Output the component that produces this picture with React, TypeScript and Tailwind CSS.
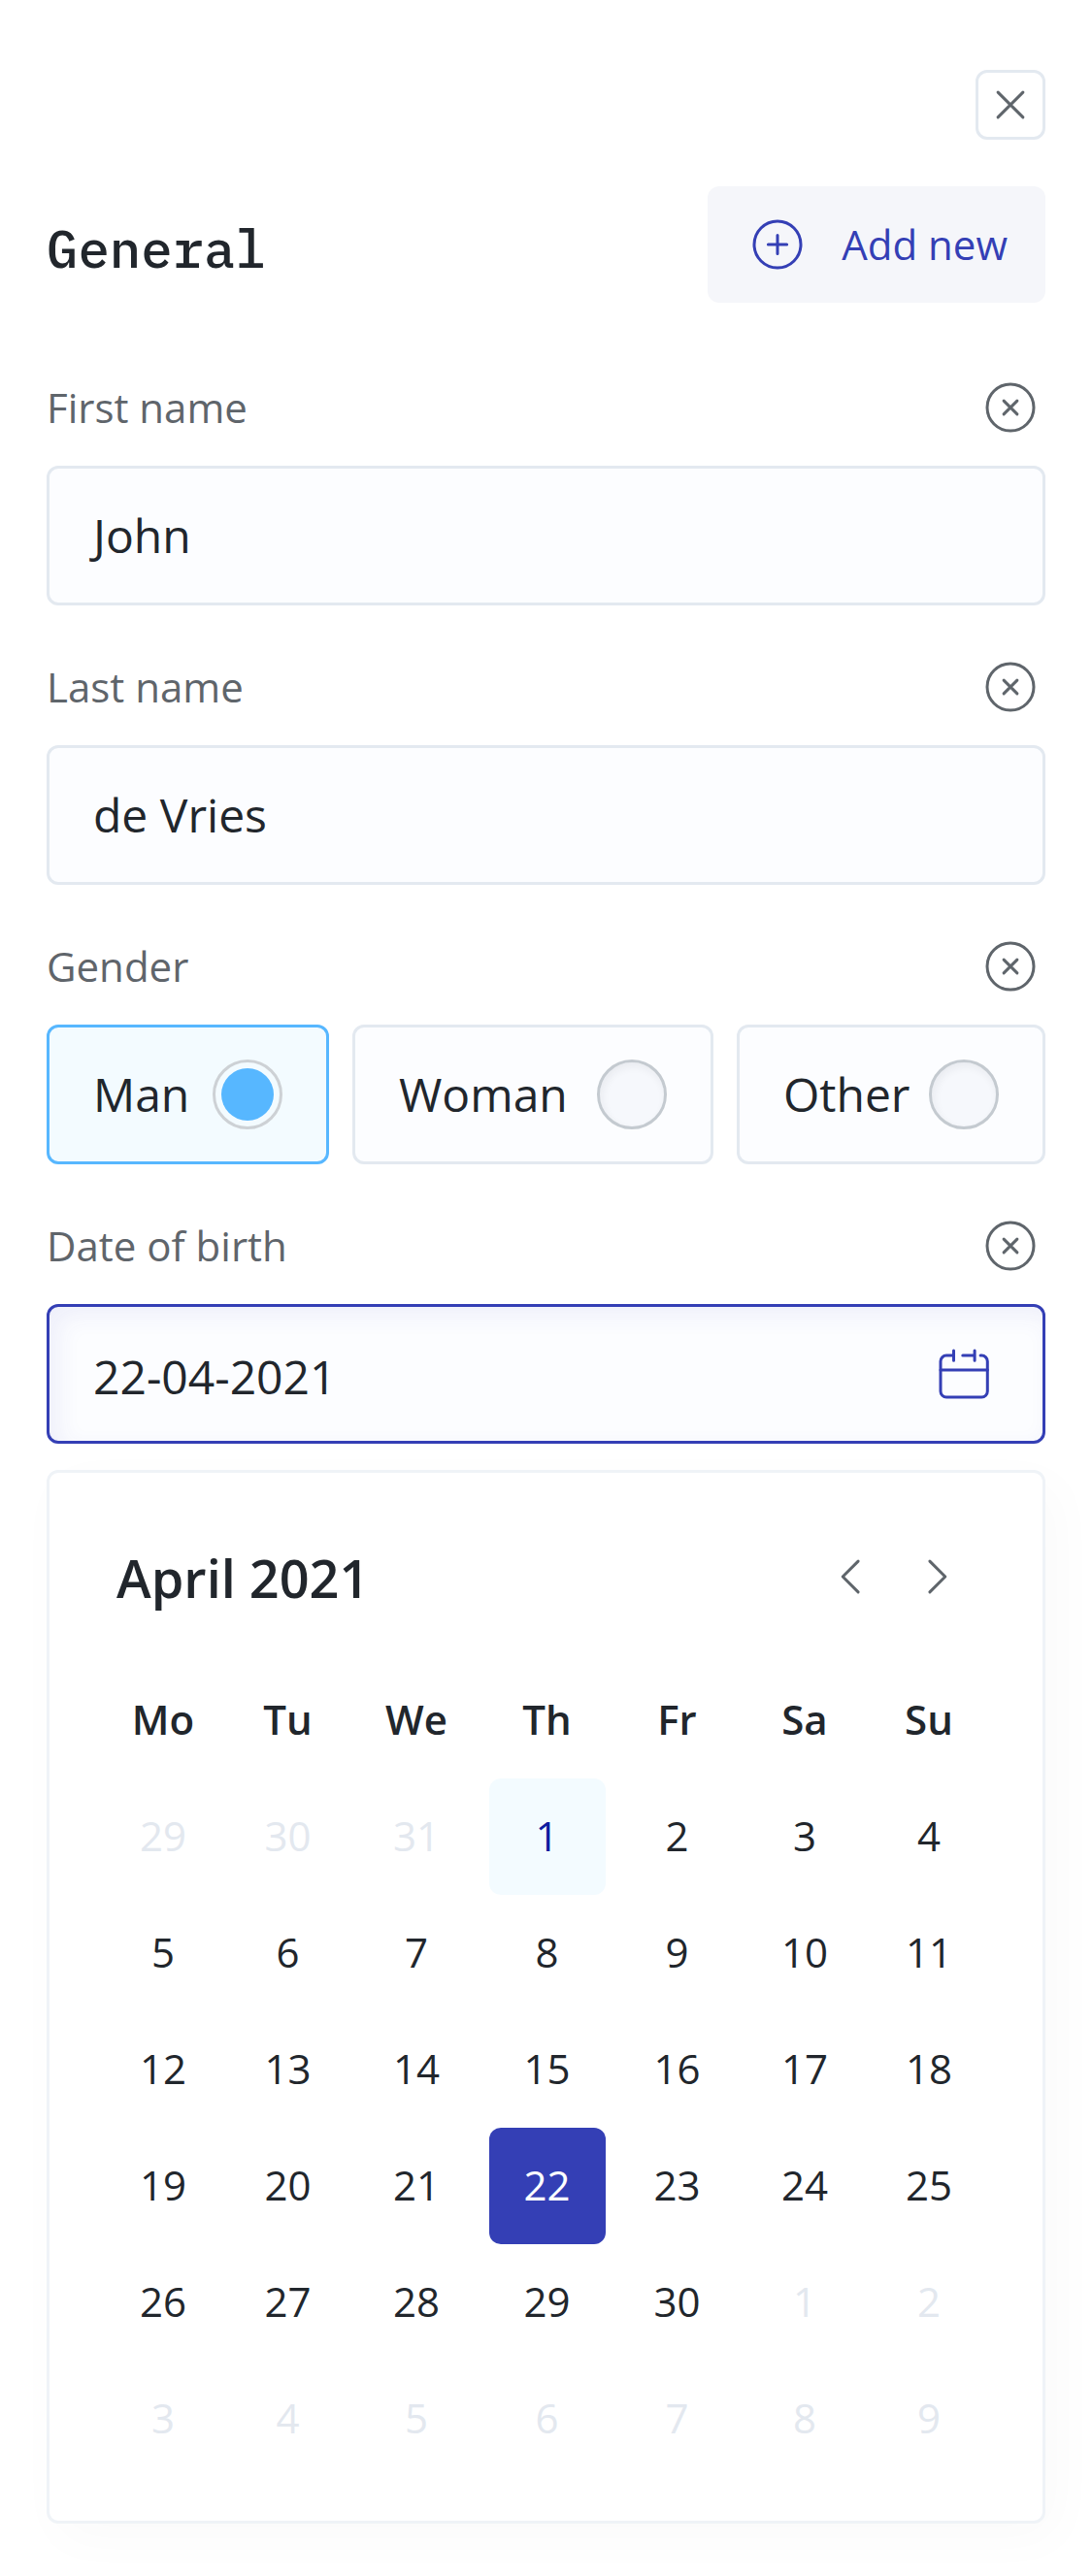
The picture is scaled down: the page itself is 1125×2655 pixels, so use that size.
import { useState } from "react";
import type { ReactNode } from "react";

const WEEKDAYS = ["Mo", "Tu", "We", "Th", "Fr", "Sa", "Su"];
const FULL_WEEKDAYS = ["Monday", "Tuesday", "Wednesday", "Thursday", "Friday", "Saturday", "Sunday"];
const COLUMN_WIDTHS = ["w-[126px]", "w-[131px]", "w-[134px]", "w-[135px]", "w-[133px]", "w-[130px]", "w-[126px]"];

type Day = { date: number; month: number };

// Six weeks starting on Monday 29 March 2021.
const WEEKS: Day[][] = Array.from({ length: 6 }, (_, week) =>
  Array.from({ length: 7 }, (_, weekday) => {
    const d = new Date(2021, 2, 29 + week * 7 + weekday);
    return { date: d.getDate(), month: d.getMonth() };
  }),
);

function Icon({ children }: { children: ReactNode }) {
  return (
    <svg
      viewBox="0 0 24 24"
      className="size-[72px] shrink-0"
      fill="none"
      stroke="currentColor"
      strokeWidth="1"
      strokeLinecap="round"
      strokeLinejoin="round"
      aria-hidden="true"
    >
      {children}
    </svg>
  );
}

function ClearButton({ name, onClick }: { name: string; onClick: () => void }) {
  return (
    <button type="button" aria-label={`Clear ${name}`} onClick={onClick}>
      <Icon>
        <circle cx="12" cy="12" r="8" />
        <path d="M9.7 9.7l4.6 4.6M14.3 9.7l-4.6 4.6" />
      </Icon>
    </button>
  );
}

function TextField({ id, label, initial }: { id: string; label: string; initial: string }) {
  const [value, setValue] = useState(initial);
  return (
    <div className="flex flex-col gap-6">
      <div className="flex items-center justify-between text-[#5f656b]">
        <label htmlFor={id} className="text-[42px] leading-[70px]">
          {label}
        </label>
        <ClearButton name={label} onClick={() => setValue("")} />
      </div>
      <input
        id={id}
        type="text"
        value={value}
        onChange={(e) => setValue(e.target.value)}
        className="h-36 w-full rounded-xl border-3 border-[#e3e9f0] bg-[#fcfdff] px-[37px] pb-0.5 indent-2 text-5xl outline-none"
      />
    </div>
  );
}

function GenderField() {
  const [gender, setGender] = useState("Man");
  return (
    <div role="radiogroup" aria-labelledby="gender-label" className="flex flex-col gap-6">
      <div className="flex items-center justify-between text-[#5f656b]">
        <span id="gender-label" className="text-[42px] leading-[70px]">
          Gender
        </span>
        <ClearButton name="Gender" onClick={() => setGender("")} />
      </div>
      <div className="grid grid-cols-[291fr_372fr_318fr] gap-6">
        {["Man", "Woman", "Other"].map((option) => (
          <label
            key={option}
            className="flex h-36 items-center justify-between rounded-xl border-3 border-[#e3e9f0] bg-[#fcfdff] px-[45px] text-5xl has-checked:border-[#57b7ff] has-checked:bg-[#f3fbff]"
          >
            {option}
            <input
              type="radio"
              name="gender"
              value={option}
              checked={gender === option}
              onChange={() => setGender(option)}
              className="size-[72px] shrink-0 appearance-none rounded-full border-3 border-[#c4cad0] bg-[#f6f8fc] p-1.5 shadow-[inset_2px_4px_9px_rgba(33,38,44,0.06)] checked:border-[#cdd1d5] checked:bg-[#57b7ff] checked:bg-clip-content checked:shadow-none"
            />
          </label>
        ))}
      </div>
    </div>
  );
}

function DayButton({ day, selected, onSelect }: { day: Day; selected: boolean; onSelect: () => void }) {
  let tone = "text-[#21262c]";
  if (selected) tone = "bg-[#343fb5] text-white";
  else if (day.month !== 3) tone = "text-[#e3e8ef]";
  else if (day.date === 1) tone = "bg-[#f3fbff] text-[#0e1ca0]";
  return (
    <button
      type="button"
      onClick={onSelect}
      aria-pressed={selected}
      className={`mx-auto flex size-[120px] items-center justify-center rounded-xl pb-0.5 ${tone}`}
    >
      {day.date}
    </button>
  );
}

function DateField() {
  const [value, setValue] = useState("22-04-2021");
  return (
    <div className="flex flex-col gap-6">
      <div className="flex items-center justify-between text-[#5f656b]">
        <label htmlFor="birth" className="text-[42px] leading-[70px]">
          Date of birth
        </label>
        <ClearButton name="Date of birth" onClick={() => setValue("")} />
      </div>
      <div className="flex h-36 items-center rounded-xl border-3 border-[#343fb5] bg-[#fcfdff] px-[45px] shadow-[inset_9px_9px_24px_rgba(52,63,181,0.07)]">
        <input
          id="birth"
          type="text"
          value={value}
          onChange={(e) => setValue(e.target.value)}
          className="h-full min-w-0 flex-1 bg-transparent pt-1 text-5xl outline-none"
        />
        <button type="button" aria-label="Toggle calendar" className="text-[#343fb5]">
          <Icon>
            <path d="M8.5 5.7H6a2 2 0 0 0-2 2V18a2 2 0 0 0 2 2h12.1a2 2 0 0 0 2-2V7.7a2 2 0 0 0-2-2h-.4" />
            <path d="M8.5 4v3.4M15.7 4v3.4M11.6 5.7h4.1M4 10.7h16.1" />
          </Icon>
        </button>
      </div>

      <section
        aria-label="Calendar"
        className="mt-[3px] rounded-xl border-3 border-[#eff3f7] bg-white px-[54px] pt-[54px] pb-[45px] shadow-[12px_15px_54px_rgba(0,0,0,0.022)]"
      >
        <div className="mb-9 flex h-[105px] items-center justify-between pr-[18px] pl-[15px]">
          <h2 className="pt-[3px] text-[54px] leading-[72px] font-semibold">April 2021</h2>
          <div className="flex gap-[18px] text-[#5f656b]">
            <button type="button" aria-label="Previous month">
              <Icon>
                <path d="M14.7 6.7L9.4 12l5.3 5.3" />
              </Icon>
            </button>
            <button type="button" aria-label="Next month">
              <Icon>
                <path d="M9.3 6.7l5.3 5.3-5.3 5.3" />
              </Icon>
            </button>
          </div>
        </div>
        <table className="w-full table-fixed border-collapse text-center text-[42px] leading-[60px]">
          <colgroup>
            {COLUMN_WIDTHS.map((width, i) => (
              <col key={i} className={width} />
            ))}
          </colgroup>
          <thead>
            <tr>
              {WEEKDAYS.map((name, i) => (
                <th key={name} scope="col" abbr={FULL_WEEKDAYS[i]} className="h-[120px] p-0 pb-0.5 font-semibold">
                  {name}
                </th>
              ))}
            </tr>
          </thead>
          <tbody>
            {WEEKS.map((week, i) => (
              <tr key={i}>
                {week.map((day) => {
                  const text = `${String(day.date).padStart(2, "0")}-${String(day.month + 1).padStart(2, "0")}-2021`;
                  return (
                    <td key={text} className="p-0">
                      <DayButton day={day} selected={value === text} onSelect={() => setValue(text)} />
                    </td>
                  );
                })}
              </tr>
            ))}
          </tbody>
        </table>
      </section>
    </div>
  );
}

export default function App() {
  return (
    <main className="flex min-h-screen flex-col bg-white px-12 pt-[72px] pb-[54px] font-['Open_Sans','Noto_Sans',sans-serif] text-[#21262c]">
      <button
        type="button"
        aria-label="Close"
        className="mb-12 flex size-[72px] items-center justify-center self-end rounded-xl border-3 border-[#e3e9f0] text-[#5f656b]"
      >
        <Icon>
          <path d="M7.7 7.7l8.6 8.6M16.3 7.7l-8.6 8.6" />
        </Icon>
      </button>

      <div className="mb-[72px] flex items-center justify-between">
        <h1 className="pt-2 font-['IBM_Plex_Mono','Liberation_Mono',monospace] text-[54px] leading-[72px] font-medium">
          General
        </h1>
        <button
          type="button"
          className="flex h-[120px] items-center gap-[30px] rounded-xl bg-[#f5f6fa] pr-[39px] pl-9 text-[42px] leading-[60px] text-[#343fb5]"
        >
          <Icon>
            <circle cx="12" cy="12" r="8" />
            <path d="M8.8 12h6.4M12 8.8v6.4" />
          </Icon>
          Add new
        </button>
      </div>

      <form className="flex flex-col gap-12">
        <TextField id="first-name" label="First name" initial="John" />
        <TextField id="last-name" label="Last name" initial="de Vries" />
        <GenderField />
        <DateField />
      </form>
    </main>
  );
}
